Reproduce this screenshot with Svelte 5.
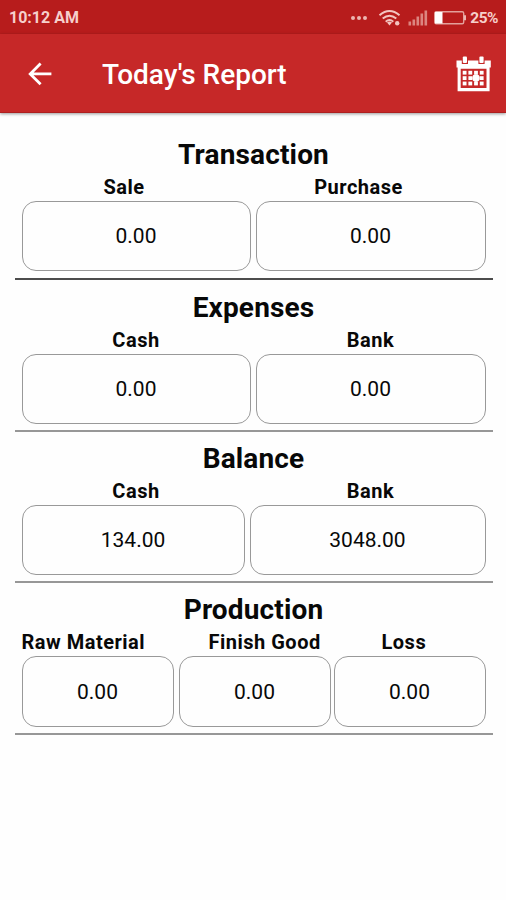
<script lang="ts">
	type Entry = { label: string; value: string };
	type Section = { title: string; layout: string; entries: Entry[] };

	const sections: Section[] = [
		{
			title: 'Transaction',
			layout: 'transaction',
			entries: [
				{ label: 'Sale', value: '0.00' },
				{ label: 'Purchase', value: '0.00' }
			]
		},
		{
			title: 'Expenses',
			layout: 'expenses',
			entries: [
				{ label: 'Cash', value: '0.00' },
				{ label: 'Bank', value: '0.00' }
			]
		},
		{
			title: 'Balance',
			layout: 'balance',
			entries: [
				{ label: 'Cash', value: '134.00' },
				{ label: 'Bank', value: '3048.00' }
			]
		},
		{
			title: 'Production',
			layout: 'production',
			entries: [
				{ label: 'Raw Material', value: '0.00' },
				{ label: 'Finish Good', value: '0.00' },
				{ label: 'Loss', value: '0.00' }
			]
		}
	];

	const rows = [14.8, 20.2, 25.6];
	const cols = [6.7, 12.4, 18.1, 23.8];
</script>

<div class="screen">
	<div class="status">
		<span class="time">10:12 AM</span>
		<div class="indicators">
			<svg class="dots" width="18" height="6" viewBox="0 0 18 6">
				<circle cx="3" cy="3" r="2" />
				<circle cx="9" cy="3" r="2" />
				<circle cx="15" cy="3" r="2" />
			</svg>
			<svg class="wifi" width="24" height="18" viewBox="0 0 24 18">
				<path d="M1.5 6.2Q11.5 -2.2 21.5 6.2M4.7 9.6Q11.5 3.8 18.3 9.6M7.7 12.7Q11.5 9.4 15.3 12.7" />
				<path class="fill" d="M9 13.4Q11.5 11.6 14 13.4L11.5 16.6Z" />
				<circle class="fill" cx="19.2" cy="14.2" r="2.2" />
			</svg>
			<svg class="signal" width="20" height="16" viewBox="0 0 20 16">
				<rect x="0.5" y="11.5" width="2.6" height="4" />
				<rect x="4.5" y="9.5" width="2.6" height="6" />
				<rect x="8.5" y="6.5" width="2.6" height="9" />
				<rect x="12.5" y="3.5" width="2.6" height="12" />
				<rect x="16.5" y="0.5" width="2.6" height="15" />
			</svg>
			<svg class="battery" width="33" height="14" viewBox="0 0 33 14">
				<rect class="shell" x="0.7" y="0.7" width="29" height="12" rx="1.5" />
				<rect class="level" x="1" y="1" width="7.5" height="11.5" />
				<path class="cap" d="M30 4.3h2v5h-2z" />
			</svg>
			<span class="percent">25%</span>
		</div>
	</div>

	<header>
		<svg class="back" width="24" height="24" viewBox="0 0 24 24">
			<path d="M12.6 1.5L2.2 11.9L12.6 22.3M2.2 11.9H23.4" />
		</svg>
		<h1>Today's Report</h1>
		<svg class="calendar" width="36" height="36" viewBox="0 0 36 36">
			<rect x="6.8" y="0.5" width="4.2" height="6.5" rx="1" />
			<rect x="23.4" y="0.5" width="4.2" height="6.5" rx="1" />
			<path
				fill-rule="evenodd"
				d="M0.5 4.5H5.8V8H12V4.5H22.4V8H28.6V4.5H34.8V11.5H33.6V35.3H1.6V11.5H0.5ZM4.7 12.7V31.9H30.5V12.7Z"
			/>
			{#each rows as y}
				{#each cols as x}
					<rect {x} {y} width="3.8" height="3.8" />
				{/each}
			{/each}
			<circle cx="20" cy="22.1" r="3.8" />
		</svg>
	</header>

	<main>
		{#each sections as section}
			<section class={section.layout}>
				<h2>{section.title}</h2>
				<div class="labels">
					{#each section.entries as entry}
						<span>{entry.label}</span>
					{/each}
				</div>
				<div class="values">
					{#each section.entries as entry}
						<div class="value">{entry.value}</div>
					{/each}
				</div>
			</section>
		{/each}
	</main>
</div>

<style>
	:global(body) {
		background: #fff;
	}

	.screen {
		width: 506px;
		height: 900px;
		overflow: hidden;
		background: #fefefe;
		font-family: Roboto, 'Liberation Sans', sans-serif;
		color: #080808;
	}

	.status {
		display: flex;
		align-items: center;
		justify-content: space-between;
		height: 34px;
		padding: 2px 8px 0 9px;
		box-sizing: border-box;
		background: #b71c1c;
		color: #f6cfcb;
	}

	.time {
		font-size: 16px;
		font-weight: 700;
		line-height: 20px;
	}

	.indicators {
		display: flex;
		align-items: center;
	}

	.indicators svg {
		fill: #edb5b0;
	}

	.indicators .dots {
		margin-right: 10px;
	}

	.indicators .wifi {
		fill: none;
		stroke: #f3c4c0;
		stroke-width: 2;
		margin-right: 6px;
	}

	.wifi .fill {
		fill: #f3c4c0;
		stroke: none;
	}

	.indicators .signal {
		fill: #dc8580;
		margin-right: 6px;
	}

	.battery {
		margin-right: 3px;
	}

	.battery .shell {
		fill: none;
		stroke: #e3a09b;
		stroke-width: 1.4;
	}

	.battery .level {
		fill: #fff;
	}

	.percent {
		font-size: 15.5px;
		font-weight: 700;
		line-height: 20px;
		letter-spacing: -0.5px;
	}

	header {
		display: flex;
		align-items: center;
		height: 79px;
		padding: 1px 14.5px 0 28px;
		box-sizing: border-box;
		background: #c62828;
		border-bottom: 1px solid #ae2020;
		box-shadow: 0 1px 3px rgba(0, 0, 0, 0.4);
	}

	.back {
		fill: none;
		stroke: #fff;
		stroke-width: 2.8;
	}

	h1 {
		flex: 1;
		margin: 2px 0 0 50px;
		color: #fff;
		font-size: 28px;
		font-weight: 500;
		line-height: 32px;
	}

	.calendar {
		fill: #fff;
	}

	main {
		padding: 15.5px 13.5px 0 14.5px;
	}

	section {
		height: 151.6px;
		padding: 11px 7px 0;
		box-sizing: border-box;
		border-bottom: 2px solid #979797;
	}

	section.transaction {
		padding-top: 10px;
		border-bottom-color: #4c4c4c;
	}

	section.expenses {
		padding-top: 11.5px;
	}

	h2 {
		margin: 0;
		font-size: 28px;
		font-weight: 700;
		line-height: 32px;
		letter-spacing: 0.15px;
		text-align: center;
	}

	.labels,
	.values {
		display: grid;
		grid-template-columns: 229px 230px;
		column-gap: 5px;
	}

	.labels {
		font-size: 20px;
		font-weight: 700;
		line-height: 24px;
		letter-spacing: 0.5px;
		padding: 4px 0 2px;
		text-align: center;
	}

	.transaction .labels {
		margin-left: -12px;
	}

	.balance .values {
		grid-template-columns: 223px 236px;
	}

	.production .labels {
		grid-template-columns: 187px 173px 46px;
		text-align: left;
		column-gap: 0;
		white-space: nowrap;
	}

	.production .values {
		grid-template-columns: 152px 152px 152px;
	}

	.production .value:last-child {
		margin: 0 2px 0 -2px;
	}

	.value {
		display: flex;
		align-items: center;
		justify-content: center;
		height: 70.5px;
		padding-top: 1px;
		box-sizing: border-box;
		border: 1px solid #999;
		border-radius: 14px;
		font-size: 21px;
	}
</style>
